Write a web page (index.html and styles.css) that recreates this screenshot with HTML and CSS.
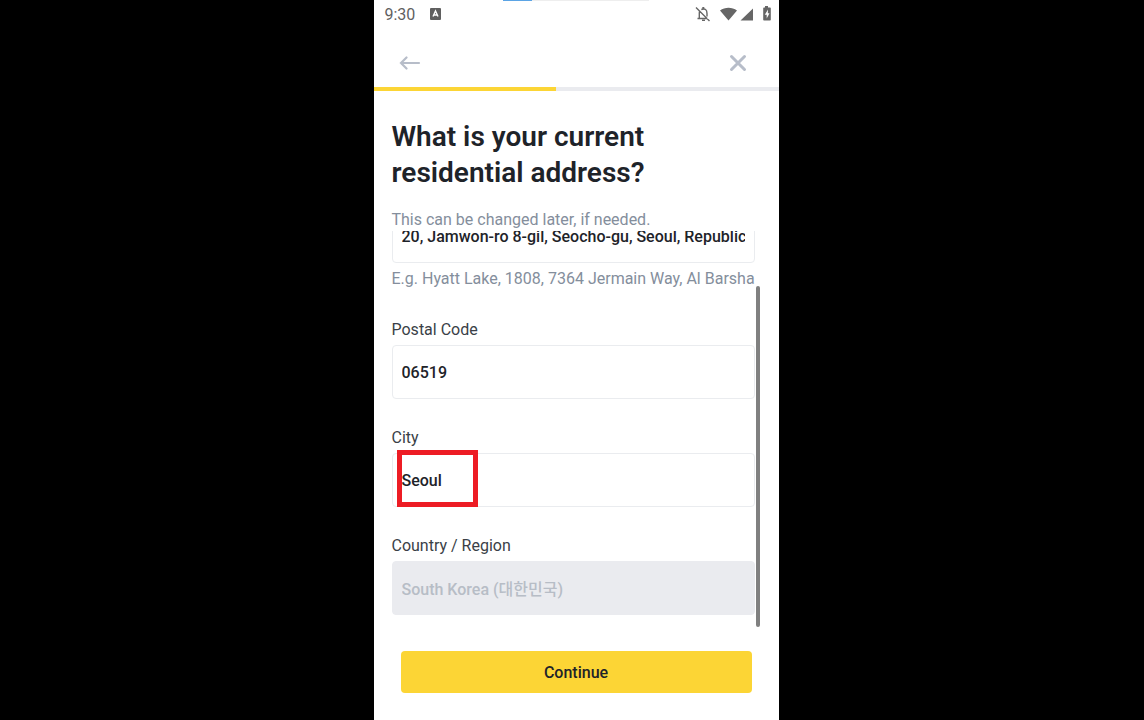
FILE: index.html
```
<!DOCTYPE html>
<html lang="en">
<head>
<meta charset="utf-8">
<title>Residential address</title>
<link rel="stylesheet" href="styles.css">
</head>
<body>
<main class="phone">
  <div class="loading"><div class="loading-value"></div></div>
  <header class="status">
    <span class="clock">9:30</span>
    <svg class="app-icon" width="11" height="12" viewBox="0 0 11 12"><rect width="11" height="12" rx="1" fill="#5f5f5f"/><path d="M3 8.500 5.500 3 8 8.500M4 7h3" fill="none" stroke="#fff" stroke-width="1.400"/></svg>
    <svg class="status-icons" width="76" height="18" viewBox="0 0 76 18">
      <g fill="none" stroke="#666" stroke-width="1.400">
        <path d="M1 2.500 14.500 16M2.500 13.500h10M4.300 13V8Q4.300 6.500 5 5.500M6.300 4.500Q12 2.500 12 8.500v3"/>
      </g>
      <path d="M7.300 2h2v2h-2zM7 14.500h3v1.500H7z" fill="#666"/>
      <path d="M25 5.500C30 1.700 37 1.700 42 5.500L33.500 15.500zM45.500 15.500 58 3.500v12z" fill="#666"/>
      <path d="M68 2.500h2V1h3v1.500H75q.8 0 .8.800v11.400q0 .8-.8.800h-6q-.8 0-.8-.8V3.300q0-.8.800-.8z" fill="#666"/>
      <path d="M73 4.500 69.800 9.800h1.900V13.500L74.500 8.300h-1.700z" fill="#fff"/>
    </svg>
  </header>
  <nav class="nav">
    <button class="icon-button" type="button" aria-label="Back">
      <svg width="22" height="14" viewBox="0 0 22 14"><path d="M20 7H2M7.500 1.500 2 7l5.500 5.500" fill="none" stroke="#b7bdc9" stroke-width="2.200" stroke-linecap="round"/></svg>
    </button>
    <button class="icon-button" type="button" aria-label="Close">
      <svg width="18" height="18" viewBox="0 0 18 18"><path d="M2.500 2.500l13 13M15.500 2.500l-13 13" fill="none" stroke="#b7bdc9" stroke-width="3" stroke-linecap="round"/></svg>
    </button>
  </nav>
  <div class="progress"><div class="progress-value"></div></div>
  <section class="intro">
    <h1 class="title">What is your current residential address?</h1>
    <p class="note">This can be changed later, if needed.</p>
  </section>
  <form class="form" id="address-form">
    <div class="field">
      <input class="input" id="address" aria-label="Address" aria-describedby="address-hint" value="20, Jamwon-ro 8-gil, Seocho-gu, Seoul, Republic of Korea">
      <p class="hint" id="address-hint">E.g. Hyatt Lake, 1808, 7364 Jermain Way, Al Barsha</p>
    </div>
    <div class="field">
      <label class="label" for="postal">Postal Code</label>
      <input class="input" id="postal" value="06519">
    </div>
    <div class="field">
      <label class="label" for="city">City</label>
      <div class="input-wrap">
        <input class="input" id="city" value="Seoul">
        <div class="marker"></div>
      </div>
    </div>
    <div class="field">
      <label class="label" for="country">Country / Region</label>
      <input class="input" id="country" value="South Korea (대한민국)" disabled>
    </div>
    <div class="scroll-thumb"></div>
  </form>
  <footer class="footer">
    <button class="continue" type="submit" form="address-form">Continue</button>
  </footer>
</main>
</body>
</html>
```
FILE: styles.css
```
* { box-sizing: border-box; }
body {
  margin: 0;
  height: 100vh;
  display: flex;
  justify-content: center;
  background: #000;
  font-family: Roboto, "Noto Sans CJK KR", sans-serif;
  font-size: 16px;
  line-height: 20px;
  color: #1e2329;
}
.phone {
  position: relative;
  width: 100%;
  max-width: 405px;
  height: 100%;
  margin-left: 8px;
  display: flex;
  flex-direction: column;
  background: #fff;
}
.loading {
  position: absolute;
  top: 0;
  left: 32%;
  width: 36%;
  height: 1px;
  background: #eee;
}
.loading-value { width: 20%; height: 100%; background: #5ba4e5; }
.status {
  height: 28px;
  padding: 0 8px 0 11px;
  display: flex;
  align-items: center;
  gap: 15px;
  color: #5f5f5f;
}
.clock { line-height: 22px; padding-top: 1px; }
.status-icons { margin-left: auto; }
.nav {
  height: 59px;
  padding: 10px 32px 0 25px;
  display: flex;
  align-items: center;
  justify-content: space-between;
}
.icon-button { display: flex; padding: 0; border: 0; background: none; }
.progress { height: 4px; flex: none; background: #eaebef; }
.progress-value { width: 45%; height: 100%; background: #fcd535; }
.intro { padding: 28px 24px 1px 18px; }
.title { max-width: 300px; margin: 0 0 19px; font-size: 28px; line-height: 36px; font-weight: 600; }
.note, .hint { margin: 0; color: #848e9c; white-space: nowrap; }
.hint { line-height: 24px; }
.form {
  position: relative;
  flex: 1;
  min-height: 0;
  overflow: hidden;
  padding: 0 24px 13px 18px;
  display: flex;
  flex-direction: column;
  justify-content: flex-end;
  gap: 28px;
}
.field { display: flex; flex-direction: column; gap: 4px; }
.label { line-height: 22px; color: #3a3f47; }
.input-wrap { position: relative; display: flex; }
.input {
  width: 100%;
  height: 54px;
  padding: 0 9px;
  border: 1px solid #eaecef;
  border-radius: 4px;
  background: #fff;
  font: inherit;
  font-weight: 500;
  color: #1e2329;
}
.input:disabled { background: #eaebef; border-color: #eaebef; color: #b7bdc6; }
.marker {
  position: absolute;
  top: -3px;
  left: 5px;
  width: 81px;
  height: 57px;
  border: 5px solid #ed1c24;
  pointer-events: none;
}
.scroll-thumb {
  position: absolute;
  right: 19px;
  bottom: 1px;
  width: 4px;
  height: 86%;
  border-radius: 2px;
  background: #808080;
}
.footer { padding: 23px 27px; }
.continue {
  width: 100%;
  height: 42px;
  margin-bottom: 4px;
  padding: 2px 0 0;
  border: 0;
  border-radius: 4px;
  background: #fcd535;
  font: inherit;
  font-weight: 500;
  color: #1e2329;
}
```
